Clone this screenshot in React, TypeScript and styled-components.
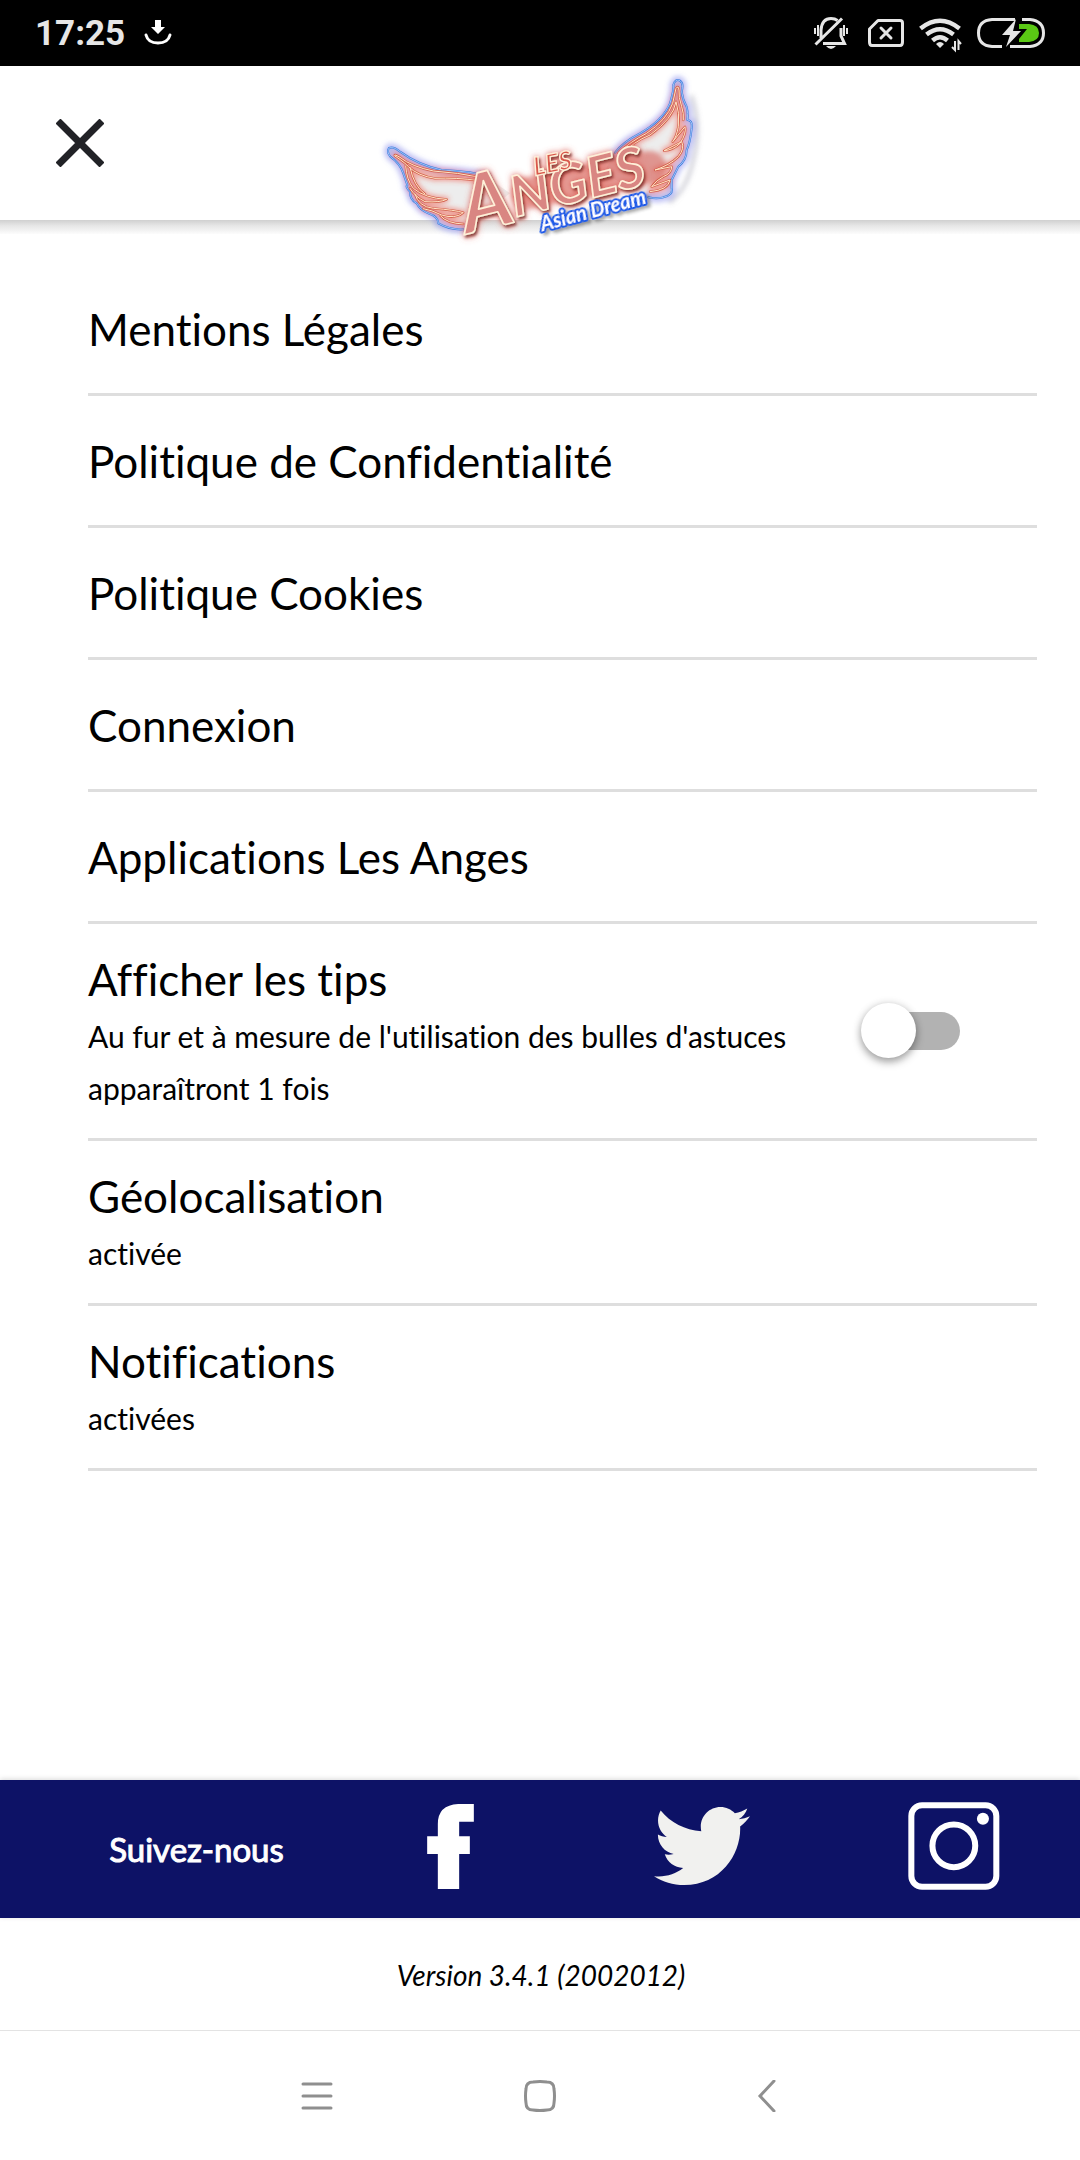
import React, { useState } from "react";
import styled, { createGlobalStyle } from "styled-components";
import { FaTwitter } from "react-icons/fa";

const GlobalStyle = createGlobalStyle`
  *, *::before, *::after { box-sizing: border-box; }
  body {
    margin: 0;
    background: #fff;
    color: #000;
    font-family: Lato, "Liberation Sans", sans-serif;
    font-variant-ligatures: no-common-ligatures;
  }
  button, a { font: inherit; color: inherit; text-decoration: none; }
  svg { display: block; }
`;

const Screen = styled.div`
  min-height: 100vh;
  display: flex;
  flex-direction: column;
`;

const StatusBar = styled.div`
  height: 66px;
  padding: 0 33px 0 35px;
  background: #000;
  color: #e6e6e6;
  display: flex;
  align-items: center;
  justify-content: space-between;
`;

const StatusGroup = styled.div`
  display: flex;
  align-items: center;
  gap: 19px;
`;

const Clock = styled.time`
  padding-top: 2px;
  font: 700 35px/40px Roboto, sans-serif;
`;

const Header = styled.header`
  position: relative;
  height: 154px;
  padding: 0 48px;
  display: grid;
  grid-template-columns: 1fr auto 1fr;
  align-items: center;
  &::after {
    content: "";
    position: absolute;
    top: 100%;
    left: 0;
    right: 0;
    height: 14px;
    background: linear-gradient(#d0d0d0, #e6e6e6 40%, #fcfcfc);
  }
`;

const PlainButton = styled.button`
  border: 0;
  padding: 0;
  background: none;
  display: flex;
  align-items: center;
  justify-content: center;
  cursor: pointer;
`;

const CloseButton = styled(PlainButton)`
  width: 64px;
  height: 64px;
`;

const LogoFrame = styled.div`
  position: relative;
  z-index: 1;
  height: 154px;
`;

const LogoText = styled.text<{ $size: number }>`
  font-family: Lato, sans-serif;
  font-weight: 700;
  font-style: italic;
  font-size: ${(p) => p.$size}px;
`;

const Settings = styled.ul`
  flex: 1;
  list-style: none;
  margin: 0;
  padding: 44px 43px 0 88px;
`;

const Item = styled.li`
  border-bottom: 3px solid #dedede;
`;

const LinkRow = styled.a`
  display: flex;
  align-items: center;
  height: 129px;
  font-size: 44px;
  line-height: 52px;
`;

const DetailRow = styled.div`
  display: flex;
  align-items: center;
  justify-content: space-between;
  padding-right: 77px;
`;

const DetailText = styled.label`
  display: block;
  padding: 29px 0 24px;
`;

const Title = styled.span`
  display: block;
  margin-bottom: 5px;
  font-size: 44px;
  line-height: 52px;
`;

const Detail = styled.span`
  display: block;
  max-width: 720px;
  font-size: 30px;
  line-height: 52px;
`;

const Switch = styled.input`
  appearance: none;
  position: relative;
  flex: none;
  margin: 0;
  width: 99px;
  height: 56px;
  cursor: pointer;
  &::before {
    content: "";
    position: absolute;
    inset: 9px 0 9px 8px;
    border-radius: 19px;
    background: #b2b2b2;
  }
  &::after {
    content: "";
    position: absolute;
    left: 0;
    top: 0;
    width: 55px;
    height: 55px;
    border-radius: 50%;
    background: #fff;
    box-shadow: 0 4px 8px rgba(0, 0, 0, 0.35), 0 0 8px rgba(0, 0, 0, 0.1);
  }
  &:checked::after { left: 44px; }
`;

const Social = styled.footer`
  height: 138px;
  padding-left: 72px;
  background: #0d1266;
  color: #fff;
  display: grid;
  grid-template-columns: repeat(4, 1fr);
  align-items: center;
  justify-items: center;
  box-shadow: 0 -1px 5px rgba(0, 0, 0, 0.15);
`;

const Follow = styled.span`
  padding-right: 3px;
  font-size: 33px;
  line-height: 40px;
  -webkit-text-stroke: 1px #fff;
`;

const SocialLink = styled.a`
  padding-bottom: 6px;
`;

const Version = styled.p`
  margin: 0;
  height: 112px;
  padding: 2px 0 0 2px;
  display: flex;
  align-items: center;
  justify-content: center;
  font-size: 28px;
  font-style: italic;
  line-height: 34px;
`;

const SystemNav = styled.nav`
  height: 130px;
  padding: 0 19%;
  border-top: 1px solid #e3e3e3;
  display: grid;
  grid-template-columns: repeat(3, 1fr);
`;

const StatusIcons = () => (
  <svg width="235" height="40" viewBox="812 13 235 40" fill="none" stroke="#e6e6e6" strokeWidth="3" aria-hidden="true">
    <path d="M815.500 44.500 842 18.500M821 38V30Q822 18.500 831 18.500Q835 18.500 837.500 20.500M841 28V36L844.500 43.500H823" />
    <path d="M815 28V34M818 25V36M844 25V36M847 28V34" strokeWidth="2" />
    <path d="M826 46H836Q831 52 826 46Z" fill="#e6e6e6" stroke="none" />
    <path d="M878 20.500H900Q902.500 20.500 902.500 23V42Q902.500 45.500 900 45.500H872Q869.500 45.500 869.500 42V29Z" strokeLinejoin="round" />
    <path d="M881 28 891 38M891 28 881 38" strokeLinecap="round" />
    <path d="M920.500 28.500Q940 13 959.500 28.500M926.500 34.500Q940 24 953.500 34.500M932.500 40.500Q940 34 947.500 40.500" strokeWidth="4.500" />
    <path d="M936 44Q940 40 944 44L940 48Z" fill="#e6e6e6" stroke="none" />
    <path d="M955 41V50L952 47M958.500 50V41L961 44" strokeWidth="2" />
    <path d="M1015 19.500H992Q978.500 20.500 978.500 33T992 46.500H1002M1010 46.500H1030Q1043.500 45 1043.500 33T1030 19.500H1022" />
    <path d="M1019 24H1029Q1039 25 1039 33T1029 42H1019V39L1027 29H1019Z" fill="#5ac814" stroke="none" />
    <path d="M1016 19 1002 35H1010L1006 47 1021 31H1013Z" fill="#e6e6e6" stroke="none" />
  </svg>
);

const leftEdge =
  "M346 348Q315 335 215 330Q145 315 90 275Q70 258 57 264Q49 275 61 290Q90 310 100 340L112 375Q105 380 120 395Q120 420 140 430Q150 450 175 460Q205 470 205 490Q240 510 280 508";
const rightEdge =
  "M735 278Q760 245 810 220Q880 180 900 130Q912 90 910 75Q915 55 930 62Q942 70 935 95Q938 120 950 140Q955 160 952 180Q968 180 965 205Q960 250 950 270Q950 300 925 320Q915 340 905 360L905 385Q910 405 880 412Q860 418 835 412";
const leftFeathers =
  "M75 288Q70 280 90 292Q125 320 190 333Q265 338 330 352Q340 358 330 362Q255 352 195 355Q145 348 115 320Q110 312 75 288M107 318Q110 360 130 385Q165 415 230 418Q210 428 165 425Q135 410 120 385M120 322Q132 380 165 402M135 402Q145 440 190 445Q255 450 280 458Q255 478 215 465Q185 450 160 446M212 468Q230 490 280 492";
const rightFeathers =
  "M745 280Q780 245 830 220Q890 180 908 130L918 85Q925 75 927 90Q925 110 935 140Q942 160 940 180M757 282Q790 245 840 225Q910 175 918 125Q930 160 925 200Q920 230 908 245L945 200Q950 220 930 250Q910 270 882 272L935 245Q945 265 925 290Q900 315 855 330L905 320Q905 340 880 350Q860 360 845 380L900 360Q895 390 840 395";

const Logo = () => (
  <svg width="340" height="194" viewBox="0 18 1020 582" fill="none" strokeLinejoin="round" strokeLinecap="round" role="img" aria-label="Les Anges Asian Dream">
    <defs>
      <filter id="glow" x="-10%" y="-20%" width="120%" height="140%">
        <feGaussianBlur stdDeviation="8" />
      </filter>
      <filter id="neon" x="-20%" y="-40%" width="140%" height="180%">
        <feDropShadow dx="5" dy="7" stdDeviation="3" floodColor="#5a1512" floodOpacity="0.7" />
        <feDropShadow dx="0" dy="0" stdDeviation="9" floodColor="#dc5a50" floodOpacity="0.9" />
      </filter>
      <filter id="shade" x="-20%" y="-40%" width="140%" height="180%">
        <feDropShadow dx="8" dy="9" stdDeviation="4" floodColor="#333" floodOpacity="0.4" />
      </filter>
    </defs>
    <path d={`${leftEdge}L420 400Z`} fill="#ededed" />
    <path d={`${rightEdge}L700 340Z`} fill="#ededed" />
    <g filter="url(#glow)">
      <path d={leftEdge + rightEdge} stroke="#6a70e8" strokeWidth="24" opacity="0.42" />
      <path d="M965 110Q995 200 970 300Q950 390 900 425" stroke="#77778f" strokeWidth="10" opacity="0.4" />
      <path d={leftFeathers + rightFeathers} stroke="#f0503c" strokeWidth="16" opacity="0.5" />
      <path d="M470 400 840 320" stroke="#d65c54" strokeWidth="96" opacity="0.6" />
    </g>
    <path d={leftEdge + rightEdge} stroke="#3d7ade" strokeWidth="6" />
    <path d={leftEdge + rightEdge} stroke="#cfe8ff" strokeWidth="2" />
    <path d={leftFeathers + rightFeathers} stroke="#d2604c" strokeWidth="7" />
    <path d={leftFeathers + rightFeathers} stroke="#ffe3c4" strokeWidth="3" />
    <g fill="#d98682" stroke="#fff0d8" strokeWidth="5" filter="url(#neon)">
      <g transform="translate(292 522) rotate(-14)">
        <LogoText $size={236}>A</LogoText>
        <LogoText $size={168} x="152" y="-14">NGES</LogoText>
      </g>
      <g transform="translate(495 347) rotate(-11)" fill="#d9584c" strokeWidth="4">
        <LogoText $size={76}>LES</LogoText>
      </g>
    </g>
    <g transform="translate(517 514) rotate(-15)" fill="#fff" stroke="#1f5be8" strokeWidth="12" paintOrder="stroke" filter="url(#shade)">
      <LogoText $size={60}>Asian Dream</LogoText>
    </g>
  </svg>
);

const FacebookIcon = () => (
  <svg width="47" height="85" viewBox="1102 130 140 255" fill="#fff" aria-hidden="true">
    <path d="M1242 130H1195Q1134 133 1134 190V227H1102V280H1134V385H1198V280H1230V227H1198V183H1242Z" />
  </svg>
);

const InstagramIcon = () => (
  <svg width="92" height="88" viewBox="988 127 275 263" fill="none" stroke="#fff" strokeWidth="18" aria-hidden="true">
    <rect x="998" y="137" width="254" height="243" rx="32" />
    <circle cx="1125" cy="258" r="64" />
    <circle cx="1212" cy="177" r="18" fill="#fff" stroke="none" />
  </svg>
);

const navItems = [
  { label: "Applications récentes", d: "M2 4H30M2 16H30M2 28H30" },
  { label: "Accueil", d: "M9 2Q16 1 23 2Q30 2 30 9Q31 16 30 23Q30 30 23 30Q16 31 9 30Q2 30 2 23Q1 16 2 9Q2 2 9 2Z" },
  { label: "Retour", d: "M27 1 13 16 27 31" },
];

const links = [
  "Mentions Légales",
  "Politique de Confidentialité",
  "Politique Cookies",
  "Connexion",
  "Applications Les Anges",
];

const statuses = [
  { title: "Géolocalisation", value: "activée" },
  { title: "Notifications", value: "activées" },
];

export default function App() {
  const [tips, setTips] = useState(false);
  return (
    <Screen>
      <GlobalStyle />
      <StatusBar>
        <StatusGroup>
          <Clock>17:25</Clock>
          <svg width="28" height="26" viewBox="0 0 28 26" fill="none" aria-hidden="true">
            <path d="M11 0H17V7H21L14 14 7 7H11Z" fill="#fff" />
            <path d="M2 15Q4 23 14 23T26 15" stroke="#fff" strokeWidth="3" strokeLinecap="round" />
          </svg>
        </StatusGroup>
        <StatusIcons />
      </StatusBar>
      <Header>
        <CloseButton aria-label="Fermer">
          <svg width="48" height="48" viewBox="0 0 48 48" stroke="#212226" strokeWidth="7" aria-hidden="true">
            <path d="M2 2 46 46M46 2 2 46" />
          </svg>
        </CloseButton>
        <LogoFrame>
          <Logo />
        </LogoFrame>
      </Header>
      <Settings>
        {links.map((label) => (
          <Item key={label}>
            <LinkRow href="#">{label}</LinkRow>
          </Item>
        ))}
        <Item>
          <DetailRow>
            <DetailText htmlFor="tips">
              <Title>Afficher les tips</Title>
              <Detail>Au fur et à mesure de l'utilisation des bulles d'astuces apparaîtront 1 fois</Detail>
            </DetailText>
            <Switch id="tips" type="checkbox" role="switch" checked={tips} onChange={() => setTips(!tips)} />
          </DetailRow>
        </Item>
        {statuses.map(({ title, value }) => (
          <Item key={title}>
            <DetailRow>
              <DetailText as="div">
                <Title>{title}</Title>
                <Detail>{value}</Detail>
              </DetailText>
            </DetailRow>
          </Item>
        ))}
      </Settings>
      <Social>
        <Follow>Suivez-nous</Follow>
        <SocialLink href="#" aria-label="Facebook"><FacebookIcon /></SocialLink>
        <SocialLink href="#" aria-label="Twitter"><FaTwitter size={96} color="#f1f1ef" /></SocialLink>
        <SocialLink href="#" aria-label="Instagram"><InstagramIcon /></SocialLink>
      </Social>
      <Version>Version 3.4.1 (2002012)</Version>
      <SystemNav>
        {navItems.map(({ label, d }) => (
          <PlainButton key={label} aria-label={label}>
            <svg width="32" height="32" viewBox="0 0 32 32" fill="none" stroke="#8f8f8f" strokeWidth="3" strokeLinecap="round" aria-hidden="true">
              <path d={d} />
            </svg>
          </PlainButton>
        ))}
      </SystemNav>
    </Screen>
  );
}
